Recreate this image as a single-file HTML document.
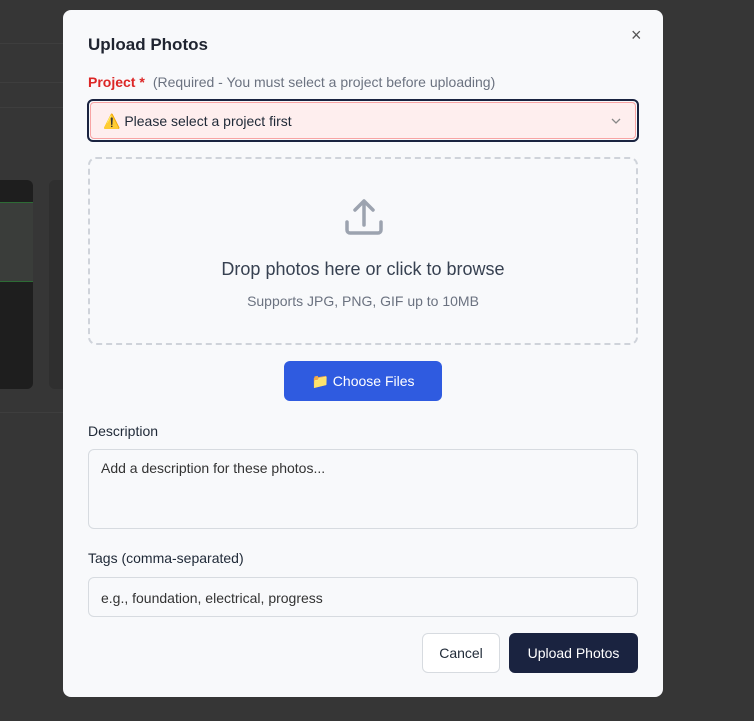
<!DOCTYPE html>
<html><head><style>
*{box-sizing:border-box;margin:0;padding:0}
body{width:754px;height:721px;background:#363636;font-family:"Liberation Sans",sans-serif;position:relative;overflow:hidden}
.bgl{position:absolute;left:0;width:63px;height:1px;background:#3e3e3e}
.modal{position:absolute;left:63px;top:10px;width:600px;height:687px;background:#f8f9fb;border-radius:8px}
.abs{position:absolute}
</style></head><body>
<div class="bgl" style="top:43px"></div>
<div class="bgl" style="top:82px"></div>
<div class="bgl" style="top:107px"></div>
<div class="abs" style="left:0;top:180px;width:33px;height:209px;background:#1e1e1e;border-radius:0 6px 6px 0"></div>
<div class="abs" style="left:0;top:202px;width:33px;height:80px;background:#3a3d3a;border-top:1px solid #2d6b35;border-bottom:1px solid #2d6b35"></div>
<div class="abs" style="left:49px;top:180px;width:14px;height:209px;background:#2f2f2f;border-radius:6px 0 0 6px"></div>
<div class="bgl" style="top:412px;width:63px"></div>
<div class="modal">
  <div class="abs" style="left:25px;top:25px;font-size:17px;font-weight:bold;color:#1f2430">Upload Photos</div>
  <div class="abs" style="left:568px;top:15px;font-size:18px;color:#555">×</div>
  <div class="abs" style="left:25px;top:64px;font-size:14px;color:#dc2626;font-weight:bold">Project *<span style="font-weight:normal;color:#6b7280;margin-left:8px">(Required - You must select a project before uploading)</span></div>
  <div class="abs" style="left:24px;top:89px;width:552px;height:43px;border:2px solid #1a2340;border-radius:6px;padding:1px">
    <div style="width:100%;height:100%;background:#feeeee;border:1px solid #f8a4a4;border-radius:4px;font-size:14px;color:#1f2937;padding:10px 0 0 12px;position:relative">⚠️ Please select a project first
      <svg class="abs" style="right:14px;top:14px" width="10" height="8" viewBox="0 0 10 8"><path d="M1 2l4 4 4-4" fill="none" stroke="#888" stroke-width="1.3"/></svg>
    </div>
  </div>
  <div class="abs" style="left:25px;top:147px;width:550px;height:188px;border:2px dashed #cfd3da;border-radius:8px">
    <svg class="abs" style="left:253px;top:36px" width="42" height="42" viewBox="0 0 42 42"><path d="M21 30V6M12 15l9-9 9 9M4 27v8a3 3 0 0 0 3 3h28a3 3 0 0 0 3-3v-8" fill="none" stroke="#9ca3af" stroke-width="3.5" stroke-linecap="round" stroke-linejoin="round"/></svg>
    <div class="abs" style="left:0;width:100%;top:100px;text-align:center;font-size:18px;color:#374151">Drop photos here or click to browse</div>
    <div class="abs" style="left:0;width:100%;top:134px;text-align:center;font-size:14px;color:#6b7280">Supports JPG, PNG, GIF up to 10MB</div>
  </div>
  <div class="abs" style="left:221px;top:351px;width:158px;height:40px;background:#2f5be0;border-radius:6px;color:#fff;font-size:14px;text-align:center;line-height:40px">📁 Choose Files</div>
  <div class="abs" style="left:25px;top:413px;font-size:14px;color:#1f2937">Description</div>
  <div class="abs" style="left:25px;top:439px;width:550px;height:80px;border:1px solid #d7dbe0;border-radius:6px;background:#f8f9fb;padding:10px 12px;font-size:14px;color:#333">Add a description for these photos...</div>
  <div class="abs" style="left:25px;top:540px;font-size:14px;color:#1f2937">Tags (comma-separated)</div>
  <div class="abs" style="left:25px;top:567px;width:550px;height:40px;border:1px solid #d7dbe0;border-radius:6px;padding:12px 12px;font-size:14px;color:#333">e.g., foundation, electrical, progress</div>
  <div class="abs" style="left:359px;top:623px;width:78px;height:40px;border:1px solid #d7dbe0;border-radius:6px;background:#fff;font-size:14px;color:#1f2937;text-align:center;line-height:38px">Cancel</div>
  <div class="abs" style="left:446px;top:623px;width:129px;height:40px;border-radius:6px;background:#1a2340;font-size:14px;color:#fff;text-align:center;line-height:40px">Upload Photos</div>
</div>
</body></html>
